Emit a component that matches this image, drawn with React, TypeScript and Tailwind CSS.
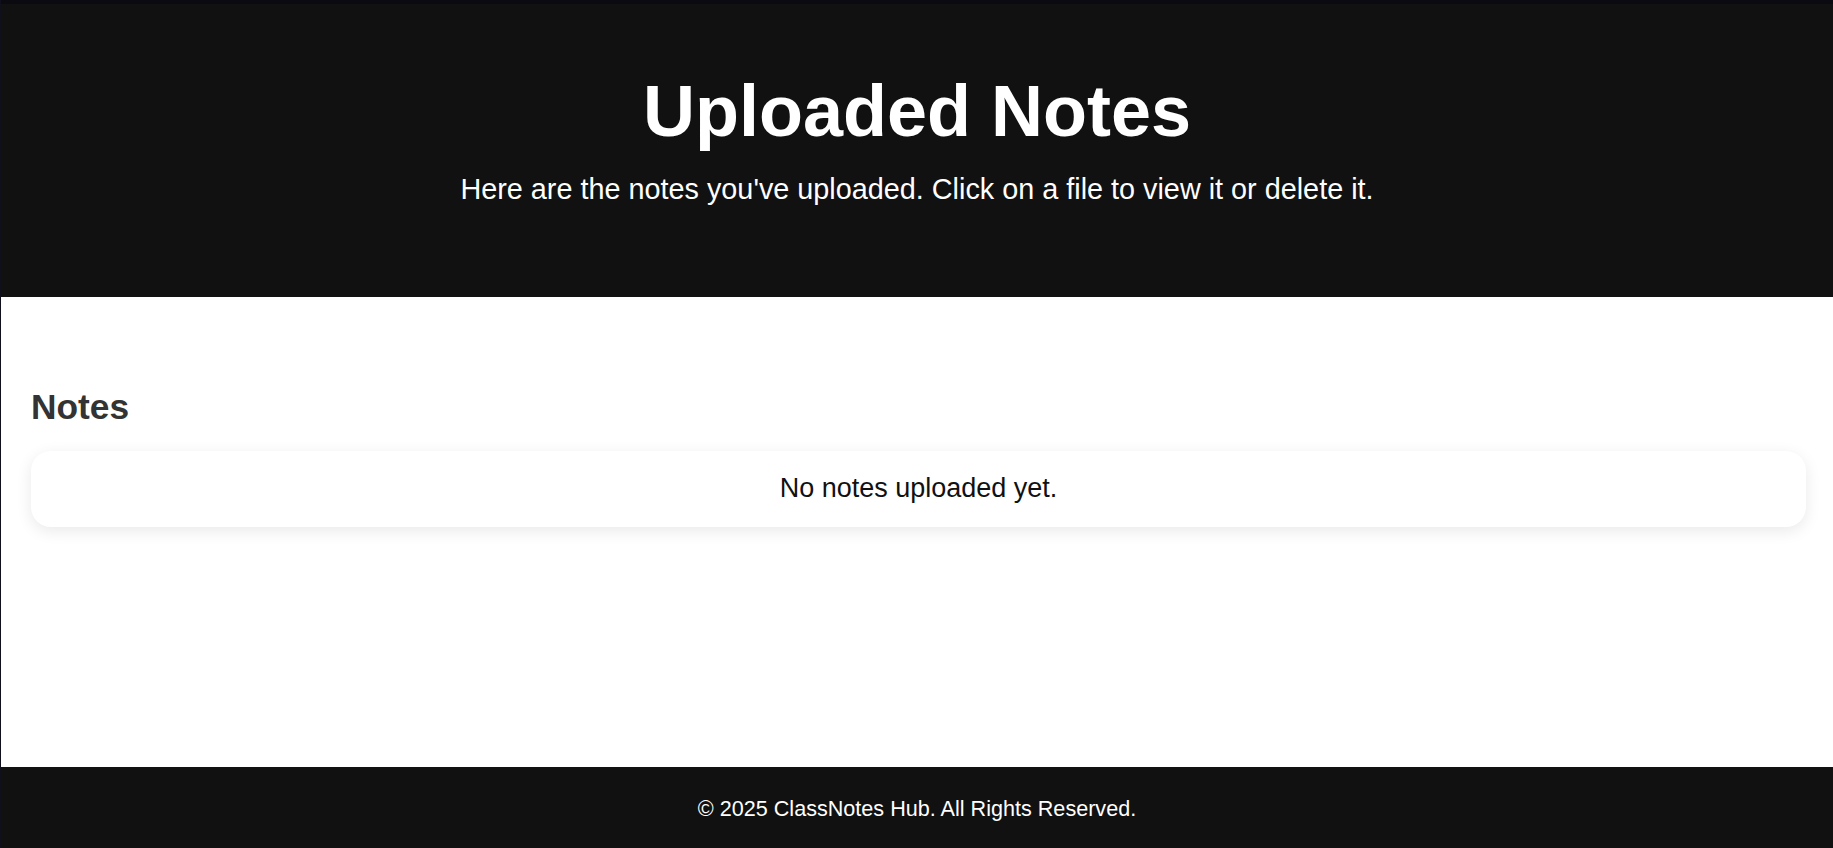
export default function App() {
  return (
    <div
      className="min-h-screen flex flex-col bg-white border-l border-[#10101c]"
      style={{ fontFamily: '"Liberation Sans", Arial, sans-serif' }}
    >
      <header className="h-[297px] shrink-0 bg-[#111111] border-t-4 border-[#0a0a10] pt-[66px] text-center text-white">
        <h1 className="text-[72px] font-bold leading-[1.15] mb-[20px]">Uploaded Notes</h1>
        <p className="text-[28.8px] leading-[1.15]">
          Here are the notes you've uploaded. Click on a file to view it or delete it.
        </p>
      </header>

      <main className="flex-1 pl-[30px] pr-[27px] pt-[90px]">
        <h2 className="text-[35.3px] font-bold leading-[1.15] text-[#333333] mb-[23px]">Notes</h2>
        <div className="bg-white rounded-[20px] shadow-[0_4px_16px_rgba(0,0,0,0.09)] py-[22.5px] text-center">
          <p className="text-[27px] leading-[1.15] text-[#111111]">No notes uploaded yet.</p>
        </div>
      </main>

      <footer className="bg-[#111111] text-white text-center pt-[30px] pb-[26px]">
        <p className="text-[21.6px] leading-[1.15]">© 2025 ClassNotes Hub. All Rights Reserved.</p>
      </footer>
    </div>
  );
}
